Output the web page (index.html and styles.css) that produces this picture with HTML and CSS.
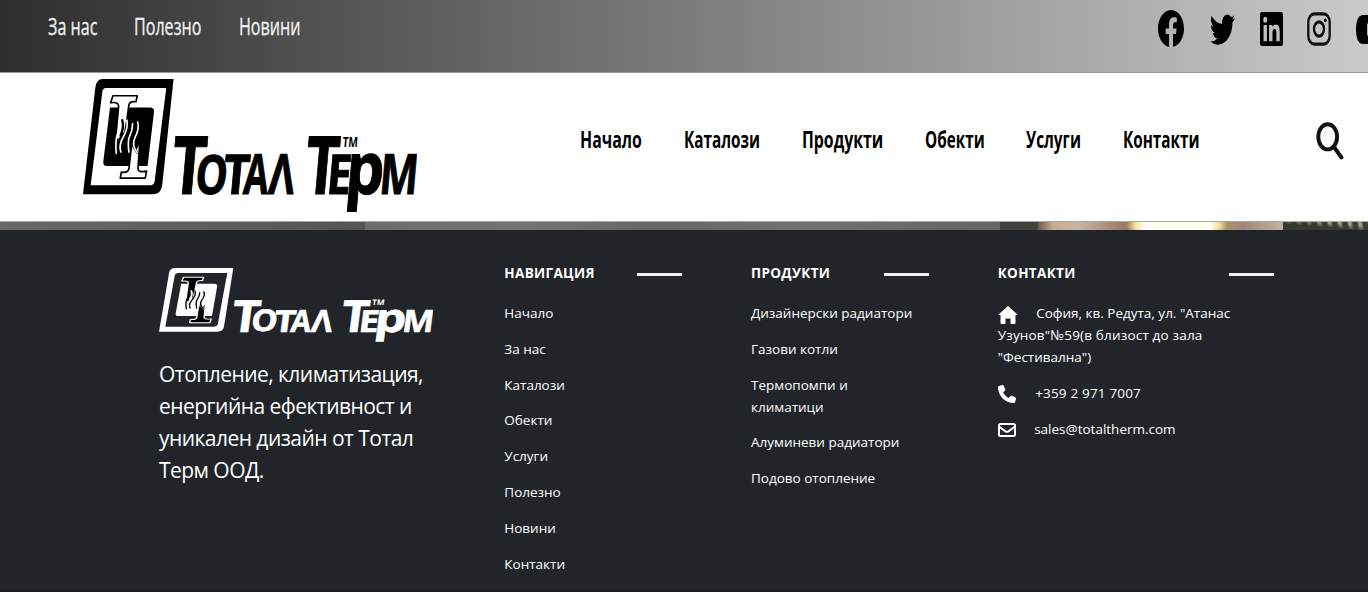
FILE: index.html
```html
<!DOCTYPE html>
<html lang="bg">
<head>
<meta charset="utf-8">
<title>Тотал Терм</title>
<link rel="stylesheet" href="styles.css">
</head>
<body>
<svg class="defs" width="0" height="0">
  <symbol id="logo" viewBox="39 22 1003 400" preserveAspectRatio="none">
    <path fill="currentColor" fill-rule="evenodd" d="M98 22H311L277 338Q273 366 252 366H39L76 48Q79 22 98 22ZM108 49Q99 49 97 60L62 339H241Q252 339 254 328L289 49Z"/>
    <path fill="currentColor" d="M120 107H240Q254 107 252 122L233 282H112Q99 282 100 268Z"/>
    <path class="bar" d="M129 72H202L198 90Q181 87 177 98L170 150L163 190L156 180L148 205L137 200L146 103Q146 89 122 93Z"/>
    <path class="bar" d="M151 318L154 300Q174 303 177 290L183 235L192 200L199 230L210 205L204 290Q205 302 230 297L226 318Z"/>
    <path class="flame-gap" d="M157 145Q163 166 152 190M181 145Q185 166 169 193T163 244M203 150Q209 170 196 195T202 242"/>
    <path class="flame" d="M148 150Q151 166 143 185T139 244M171 145Q175 170 160 195T153 240M188 155Q188 175 180 190T177 240M203 150Q209 170 196 195T202 242"/>
    <g class="word" transform="translate(32 0) skewX(-5)">
      <text x="299" y="366" font-size="240" textLength="104" lengthAdjust="spacingAndGlyphs">Т</text>
      <text x="372" y="364" font-size="162" textLength="97" lengthAdjust="spacingAndGlyphs">О</text>
      <text x="456" y="366" font-size="164" textLength="79" lengthAdjust="spacingAndGlyphs">Т</text>
      <text x="518" y="366" font-size="166" textLength="74" lengthAdjust="spacingAndGlyphs">А</text>
      <text x="593" y="366" font-size="166" textLength="77" lengthAdjust="spacingAndGlyphs">Λ</text>
      <text x="700" y="366" font-size="240" textLength="102" lengthAdjust="spacingAndGlyphs">Т</text>
      <text x="767" y="366" font-size="164" textLength="74" lengthAdjust="spacingAndGlyphs">Е</text>
      <text x="823" y="366" font-size="216" textLength="116" lengthAdjust="spacingAndGlyphs">р</text>
      <text x="926" y="366" font-size="166" textLength="116" lengthAdjust="spacingAndGlyphs">М</text>
      <text class="tm" x="805" y="224" font-size="42" textLength="46" lengthAdjust="spacingAndGlyphs">TM</text>
    </g>
  </symbol>
</svg>

<div class="topbar">
  <nav class="topnav">
    <a><span>За нас</span></a><a><span>Полезно</span></a><a><span>Новини</span></a>
  </nav>
  <div class="social">
    <svg viewBox="0 0 16 16" preserveAspectRatio="none"><path d="M16 8.049c0-4.446-3.582-8.05-8-8.05C3.58 0-.002 3.603-.002 8.05c0 4.017 2.926 7.347 6.75 7.951v-5.625h-2.03V8.05H6.75V6.275c0-2.017 1.195-3.131 3.022-3.131.876 0 1.791.157 1.791.157v1.98h-1.009c-.993 0-1.303.621-1.303 1.258v1.51h2.218l-.354 2.326H9.25V16c3.824-.604 6.75-3.934 6.75-7.951"/></svg>
    <svg viewBox="0 0 16 16" preserveAspectRatio="none"><path d="M5.026 15c6.038 0 9.341-5.003 9.341-9.334q.002-.211-.006-.422A6.7 6.7 0 0 0 16 3.542a6.7 6.7 0 0 1-1.889.518 3.3 3.3 0 0 0 1.447-1.817 6.5 6.5 0 0 1-2.087.793A3.286 3.286 0 0 0 7.875 6.03a9.32 9.32 0 0 1-6.767-3.429 3.29 3.29 0 0 0 1.018 4.382A3.3 3.3 0 0 1 .64 6.575v.045a3.29 3.29 0 0 0 2.632 3.218 3.2 3.2 0 0 1-.865.115 3 3 0 0 1-.614-.057 3.28 3.28 0 0 0 3.067 2.277A6.6 6.6 0 0 1 .78 13.58a6 6 0 0 1-.78-.045A9.34 9.34 0 0 0 5.026 15"/></svg>
    <svg viewBox="0 32 448 448" preserveAspectRatio="none"><path d="M416 32H32C14 32 0 47 0 64v384c0 17 14 32 32 32h384c18 0 32-15 32-32V64c0-17-14-32-32-32zM135 416H69V202h66v214zM102 173a38 38 0 1 1 0-77 38 38 0 0 1 0 77zM384 416h-66V312c0-25-1-57-35-57-35 0-40 27-40 55v106h-66V202h64v29h1c9-17 31-35 63-35 67 0 79 45 79 103v117z"/></svg>
    <svg viewBox="0 0 24 24" preserveAspectRatio="none" fill="none" stroke="#111" stroke-width="2.3"><rect x="1.3" y="1.3" width="21.4" height="21.4" rx="6"/><circle cx="12" cy="12" r="5"/><circle cx="18.3" cy="5.9" r="1.4" fill="#111" stroke="none"/></svg>
    <svg class="yt" viewBox="0 0 36 28" preserveAspectRatio="none"><path fill-rule="evenodd" d="M7 0Q18-1 29 0Q36 1 36 14Q36 27 29 28Q18 29 7 28Q0 27 0 14Q0 1 7 0ZM12.5 8V20L24 14Z"/></svg>
  </div>
</div>

<header class="header">
  <svg class="logo"><use href="#logo"/></svg>
  <nav class="mainnav">
    <a><span>Начало</span></a><a><span>Каталози</span></a><a><span>Продукти</span></a><a><span>Обекти</span></a><a><span>Услуги</span></a><a><span>Контакти</span></a>
  </nav>
  <svg class="search" viewBox="0 0 28 38"><ellipse cx="11.7" cy="14.8" rx="9.4" ry="12.6"/><path d="M18 25L25.5 35.5"/></svg>
</header>
<div class="photo"><i class="wall"></i><i class="concrete"></i><i class="dark"></i><i class="lamp"></i><i class="books"></i></div>

<footer class="footer">
  <section class="about">
    <svg class="logo"><use href="#logo"/></svg>
    <p>Отопление, климатизация,<br>енергийна ефективност и<br>уникален дизайн от Тотал<br>Терм ООД.</p>
  </section>
  <section class="col">
    <h6>НАВИГАЦИЯ<i></i></h6>
    <p>Начало</p><p>За нас</p><p>Каталози</p><p>Обекти</p><p>Услуги</p><p>Полезно</p><p>Новини</p><p>Контакти</p>
  </section>
  <section class="col">
    <h6>ПРОДУКТИ<i></i></h6>
    <p>Дизайнерски радиатори</p><p>Газови котли</p><p>Термопомпи и<br>климатици</p><p>Алуминеви радиатори</p><p>Подово отопление</p>
  </section>
  <section class="col contacts">
    <h6>КОНТАКТИ<i></i></h6>
    <p><svg class="home" viewBox="0 0 20 18"><path d="M10 0L20 9H17.5V17Q17.5 18 16.5 18H12.5V12.5H7.5V18H3.5Q2.5 18 2.5 17V9H0Z"/></svg>София, кв. Редута, ул. "Атанас<br><span class="wide">Узунов"№59(в близост до зала</span><br>"Фестивална")</p>
    <p><svg class="phone" viewBox="0 0 512 512"><path d="M165 25C157 6 136-5 116 1L28 25C11 30 0 46 0 64c0 247 201 448 448 448 18 0 34-12 39-29l24-88c6-20-5-41-24-49l-96-40c-16-7-35-2-46 12l-41 49c-70-33-127-90-160-161l49-40c14-11 19-30 12-46L165 25z"/></svg><span class="wide">+359 2 971 7007</span></p>
    <p><svg class="mail" viewBox="0 0 18 14"><rect x="1" y="1" width="16" height="12" rx="1.5"/><path d="M1 3.5L7.5 8.3Q9 9.2 10.5 8.3L17 3.5"/></svg>sales@totaltherm.com</p>
  </section>
</footer>
</body>
</html>
```
FILE: styles.css
```css
* { box-sizing: border-box; }
body {
  margin: 0;
  width: 1368px;
  height: 592px;
  overflow: hidden;
  display: flex;
  flex-direction: column;
  font-family: "Open Sans", "Noto Sans", sans-serif;
  font-feature-settings: "locl" 0;
  background: #212529;
}
.defs { display: none; }
a span { display: inline-block; transform-origin: left; white-space: nowrap; }

.topbar {
  height: 73px;
  flex: none;
  display: flex;
  justify-content: space-between;
  background: linear-gradient(90deg, #2d2d2d, #cacaca);
  border-bottom: 1px solid #999;
}
.topnav {
  display: grid;
  grid-template-columns: 86px 105px 80px;
  padding: 10px 0 0 48px;
  color: #f2f2f2;
  font-size: 23px;
  line-height: 32px;
  -webkit-text-stroke: .3px #f2f2f2;
}
.topnav span { transform: scaleX(.7); }
.social { width: 210.500px; display: flex; padding-top: 10px; overflow: hidden; }
.social svg { flex: none; width: 26px; height: 37px; margin-right: 26px; }
.social svg:nth-child(2) { width: 25px; height: 37px; margin-right: 25px; }
.social svg:nth-child(3) { width: 23px; height: 34px; margin: 2px 24px 0 0; }
.social svg:nth-child(4) { width: 24px; height: 34px; margin: 2px 25px 0 0; }
.social .yt { width: 32px; height: 29px; margin: 5px 0 0; }

.header {
  height: 148px;
  flex: none;
  display: flex;
  background: #fff;
  padding-left: 83px;
}
.header .logo { width: 334px; height: 134px; margin-top: 6px; color: #000; --bar: #fff; flex: none; }
.bar { fill: var(--bar); stroke: currentColor; stroke-width: 5; stroke-linejoin: round; }
.flame, .flame-gap { fill: none; stroke: var(--bar); stroke-width: 5; stroke-linecap: round; }
.flame-gap { stroke: currentColor; stroke-width: 7; }
.word { fill: currentColor; stroke: currentColor; stroke-width: 3; font-family: "Open Sans", sans-serif; font-weight: 700; }
.tm { stroke-width: 0; }
.mainnav {
  display: grid;
  grid-template-columns: 104px 118px 123px 101px 97px 90px;
  margin-left: 163px;
  padding-top: 50px;
  font-size: 23px;
  line-height: 32px;
  font-weight: 700;
  color: #000;
}
.mainnav span { transform: scaleX(.665); }
.mainnav a:nth-child(1) span { transform: scaleX(.69); }
.mainnav a:nth-child(3) span { transform: scaleX(.69); }
.search { width: 28px; height: 38px; margin: 49px 0 0 103px; fill: none; stroke: #111; stroke-width: 3.9; stroke-linecap: round; }

.photo { display: flex; height: 9px; flex: none; border-top: 1px solid #aaa; }
.wall { width: 365px; background: linear-gradient(90deg, #696765, #5d5d59 60%, #565450); }
.concrete { width: 635px; background: linear-gradient(90deg, #706a68, #777170 25%, #6b6664 45%, #746e6c 70%, #696462); }
.dark { width: 38px; background: #44443e; }
.lamp { width: 245px; background: radial-gradient(ellipse 48px 18px at 139px 3px, #fffef0 70%, #f7df9a 88%, transparent 105%), linear-gradient(90deg, #6d594b, #c9ab8c 15px, #c8b5a5 40px, #9c7b65 85px, #b59669 180px, #a08778 205px, #c4b3a4 245px); }
.books { width: 85px; background: linear-gradient(5deg, #373a32 40%, transparent 75%), repeating-linear-gradient(80deg, #3c3c34 0 4px, #aaa08f 6px 8px, #49483f 10px); }

.footer { flex: 1; display: flex; color: #fff; font-size: 13.5px; line-height: 22px; border-bottom: 3px solid #1c1e22; }
.about { width: 504px; padding: 38px 0 0 159px; }
.about .logo { display: block; width: 274px; height: 74px; color: #fff; --bar: #000; }
.about p { margin: 16px 0 0; font-size: 21px; letter-spacing: -.54px; line-height: 32px; white-space: nowrap; }
.col { width: 246.700px; padding: 32px 0 0 .3px; white-space: nowrap; }
.col h6 { display: flex; align-items: center; justify-content: space-between; width: 178px; margin: 0 0 18px; font-size: 13.5px; letter-spacing: .35px; line-height: 22px; font-weight: 700; }
.col h6 i { width: 45px; height: 3px; margin-top: 2px; background: #f1f1f1; }
.col p { margin: 0 0 13.8px; }
.wide { letter-spacing: .18px; }
.contacts h6 { width: 276px; }
.contacts svg { fill: #fff; vertical-align: -4px; }
.contacts .home { width: 20px; height: 18px; margin-right: 18.500px; vertical-align: -6px; }
.contacts .phone { width: 18px; height: 18px; margin-right: 19.500px; vertical-align: -5px; }
.contacts .mail { width: 18px; height: 14px; margin-right: 18.500px; vertical-align: -3px; fill: none; stroke: #fff; stroke-width: 2; }
```
